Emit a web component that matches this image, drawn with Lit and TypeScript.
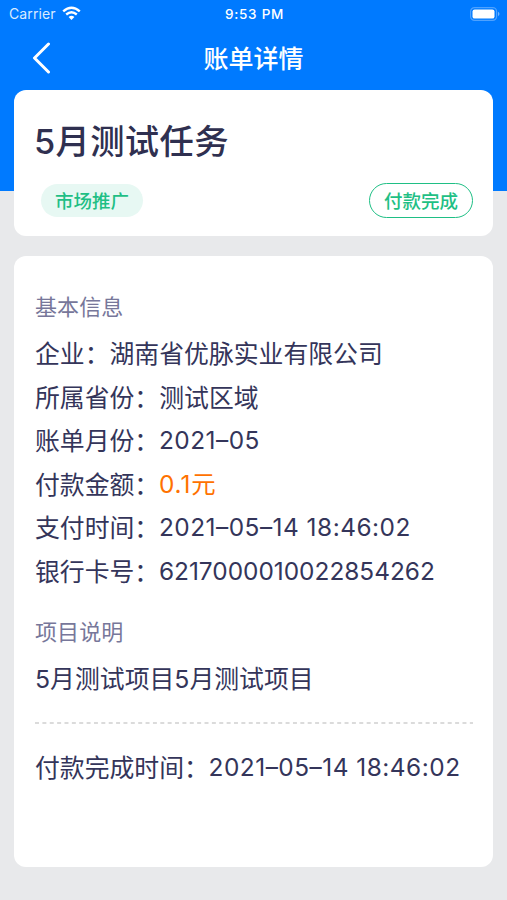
import { LitElement, html, css } from "lit";
import { customElement } from "lit/decorators.js";

interface Row { label: string; value: string; kind: string; }

const rows: Row[] = [
  { label: "企业：", value: "湖南省优脉实业有限公司", kind: "cjk" },
  { label: "所属省份：", value: "测试区域", kind: "cjk" },
  { label: "账单月份：", value: "2021–05", kind: "num date" },
  { label: "付款金额：", value: "0.1元", kind: "num money" },
  { label: "支付时间：", value: "2021–05–14 18:46:02", kind: "num date" },
  { label: "银行卡号：", value: "6217000010022854262", kind: "num" },
];

@customElement("app-root")
export class AppRoot extends LitElement {
  static styles = css`
    :host {
      display: block;
      box-sizing: border-box;
      height: 900px;
      overflow: hidden;
      background: linear-gradient(#007aff 191px, #e8e9eb 191px);
      font-family: Inter, "Noto Sans CJK SC", sans-serif;
      color: #34355a;
    }
    * { box-sizing: border-box; }
    .status {
      display: grid;
      grid-template-columns: 1fr auto 1fr;
      align-items: center;
      height: 28px;
      padding: 0 7px 0 9px;
      color: #fff;
      font-size: 14px;
      line-height: 28px;
    }
    .carrier { display: flex; align-items: center; gap: 6px; color: #d9ebff; letter-spacing: 0.1px; }
    .carrier svg { margin-top: -2px; }
    .clock { font-size: 13.5px; font-weight: 500; letter-spacing: 0.75px; }
    .battery { justify-self: end; display: block; margin-top: -1px; }
    .nav {
      display: grid;
      grid-template-columns: 1fr auto 1fr;
      align-items: center;
      height: 60px;
      margin-bottom: 2px;
      padding: 0 32px;
      color: #fff;
    }
    .back { display: block; margin-left: -1px; }
    .title { font-size: 25px; font-weight: 500; line-height: 36px; margin-top: -2px; font-family: "Noto Sans CJK SC", sans-serif; }
    .card { margin: 0 14px; background: #fff; border-radius: 12px; padding: 0 20px 0 21px; }
    .summary { height: 146px; padding-top: 29px; }
    .task { font-size: 34.3px; line-height: 46px; font-weight: 500; white-space: nowrap; margin-left: -1px; letter-spacing: 0.35px; color: #2f3050; }
    .tags { display: flex; justify-content: space-between; align-items: center; margin-top: 18px; padding-left: 6px; }
    .tag {
      font-size: 18.5px;
      line-height: 34px;
      height: 33px;
      padding: 0 14px;
      border-radius: 18px;
      background: #e7f8f3;
      color: #1fbf85;
      font-weight: 500;
    }
    .tag.done { height: 35px; line-height: 34px; padding: 0 14px; border: 1px solid #1fbf85; background: #fff; }
    .detail { display: flex; flex-direction: column; margin-top: 20px; height: 611px; padding-top: 36px; }
    .heading { font-size: 22px; line-height: 30px; color: #77779a; letter-spacing: 0.1px; }
    .rows { margin-top: 11px; }
    .row { display: flex; font-size: 24.85px; line-height: 43.5px; height: 43.5px; white-space: nowrap; }
    .num { font-size: 24.4px; line-height: 41px; margin-left: -0.3px; }
    .date { letter-spacing: 0.5px; }
    .money { color: #ff7200; letter-spacing: 0.9px; }
    .second { margin-top: 22.5px; }
    .desc { margin-top: 11px; }
    .rule { display: block; width: 100%; height: 2px; margin-top: 21px; }
    .last { margin-top: 23px; }
  `;

  render() {
    return html`
      <div class="status">
        <div class="carrier">
          <span>Carrier</span>
          <svg width="19" height="15" viewBox="0 0 19 15" fill="none" stroke="#fff" stroke-width="2.4">
            <path d="M1.2 5.4 Q9.5 -2 17.8 5.4"/>
            <path d="M4.2 8.5 Q9.5 4 14.8 8.5"/>
            <path d="M9.5 14 L6.6 11 Q9.5 8.6 12.4 11 Z" fill="#fff" stroke="none"/>
          </svg>
        </div>
        <span class="clock">9:53 PM</span>
        <svg class="battery" width="30" height="14" viewBox="0 0 30 14">
          <rect x=".6" y=".6" width="26" height="12.8" rx="4" fill="none" stroke="#4ea2ff" stroke-width="1.2"/>
          <rect x="2.5" y="2.4" width="22" height="9.2" rx="2.2" fill="#fff"/>
          <path d="M28 4.8 Q31 7 28 9.2Z" fill="#72b5ff"/>
        </svg>
      </div>
      <div class="nav">
        <svg class="back" width="20" height="32" viewBox="0 0 20 32" fill="none" stroke="#fff" stroke-width="3" stroke-linecap="round" stroke-linejoin="round">
          <path d="M17.5 2 L3.5 16 L17.5 30"/>
        </svg>
        <span class="title">账单详情</span>
      </div>
      <section class="card summary">
        <div class="task">5月测试任务</div>
        <div class="tags">
          <span class="tag">市场推广</span>
          <span class="tag done">付款完成</span>
        </div>
      </section>
      <section class="card detail">
        <div class="heading">基本信息</div>
        <div class="rows">
          ${rows.map((r) => html`<div class="row"><span>${r.label}</span><span class=${r.kind}>${r.value}</span></div>`)}
        </div>
        <div class="heading second">项目说明</div>
        <div class="row desc">5月测试项目5月测试项目</div>
        <svg class="rule"><line x1="0" y1="1" x2="438" y2="1" stroke="#d0d0d0" stroke-width="1.5" stroke-dasharray="4 3.37"/></svg>
        <div class="row last"><span>付款完成时间：</span><span class="num date">2021–05–14 18:46:02</span></div>
      </section>
    `;
  }
}
